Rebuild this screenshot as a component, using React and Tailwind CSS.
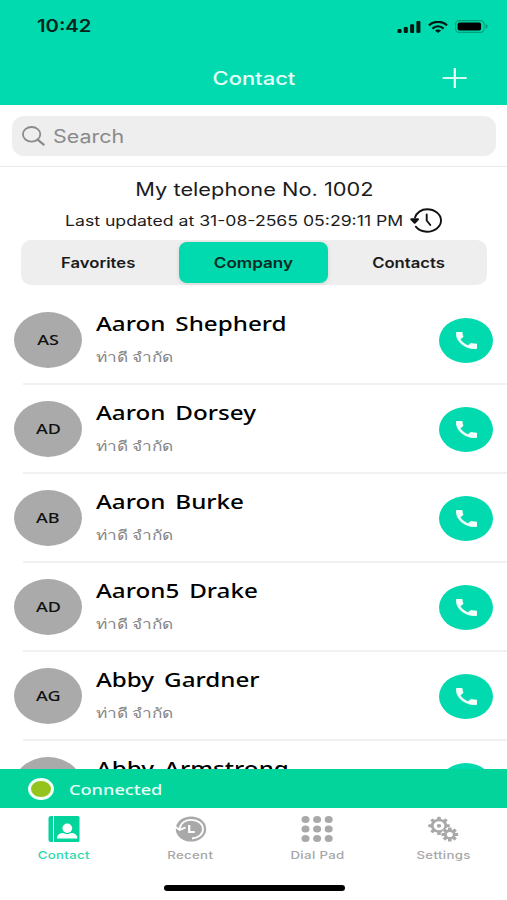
import clsx from 'clsx'

const contacts = [
  { initials: 'AS', name: 'Aaron Shepherd' },
  { initials: 'AD', name: 'Aaron Dorsey' },
  { initials: 'AB', name: 'Aaron Burke' },
  { initials: 'AD', name: 'Aaron5 Drake' },
  { initials: 'AG', name: 'Abby Gardner' },
  { initials: 'AA', name: 'Abby Armstrong' },
]

const company = 'ท่าดี จำกัด'

function StatusBar() {
  return (
    <div className="flex h-[53px] items-center justify-between pl-[37px] pr-[19px]">
      <span className="origin-left scale-x-[1.19] text-[17px] leading-none font-semibold text-[#06231c]">10:42</span>
      <div className="flex items-center gap-[7px]">
        <svg className="h-[12px] w-[24px]" viewBox="0 0 24 12" fill="#001a12">
          <rect x="0.5" y="8" width="4" height="4" rx="1" />
          <rect x="6.8" y="6" width="4" height="6" rx="1" />
          <rect x="13.1" y="3.2" width="4" height="8.8" rx="1" />
          <rect x="19.4" y="0" width="4" height="12" rx="1" />
        </svg>
        <svg className="h-[12px] w-[20px]" viewBox="0 0 20 12" preserveAspectRatio="none" fill="none" stroke="#001a12" strokeWidth="2.3">
          <path d="M1 4.4C6 -0.4 14 -0.4 19 4.4" />
          <path d="M4.4 7.7c3.3-3 7.9-3 11.2 0" />
          <path d="M10 12 6.9 9.6c1.7-1.5 4.5-1.5 6.2 0z" fill="#001a12" stroke="none" />
        </svg>
        <svg className="h-[13px] w-[33px]" viewBox="0 0 33 13">
          <rect x="0.6" y="0.6" width="28.5" height="11.8" rx="3.6" fill="none" stroke="#00a17a" strokeWidth="1.1" />
          <rect x="2.6" y="2.4" width="23.5" height="8.2" rx="2" fill="#000" />
          <path d="M30.7 4.3c2.6.6 2.6 3.8 0 4.4z" fill="#009b76" />
        </svg>
      </div>
    </div>
  )
}

function Header() {
  return (
    <header className="h-[105px] bg-[#01daae]">
      <StatusBar />
      <div className="grid h-[50px] grid-cols-[1fr_auto_1fr] items-center">
        <span />
        <h1 className="mt-[1px] scale-x-[1.22] text-[18px] leading-none font-medium text-[#e6fff8]">Contact</h1>
        <svg className="mr-[40px] h-[20px] w-[25px] justify-self-end" viewBox="0 0 25 20" stroke="#eafff9">
          <path d="M12.8 0v20" strokeWidth="2.2" />
          <path d="M0.7 10h24" strokeWidth="1.8" />
        </svg>
      </div>
    </header>
  )
}

function SearchBar() {
  return (
    <div className="h-[62px] border-b border-[#ebebeb] pt-[11px] pr-[11px] pl-[12px]">
      <div className="flex h-[40px] items-center gap-[8px] rounded-[12px] bg-[#eeeeee] pl-[10px] text-[#8a8a8c]">
        <svg className="h-[20px] w-[23px]" viewBox="0 0 23 20" fill="none" stroke="currentColor" strokeWidth="1.8">
          <ellipse cx="9.6" cy="8.3" rx="8.7" ry="7.3" />
          <path d="m15.6 13.6 6.1 5" strokeWidth="2.2" strokeLinecap="round" />
        </svg>
        <span className="mt-[1px] origin-left scale-x-[1.19] text-[18px] leading-none">Search</span>
      </div>
    </div>
  )
}

function HistoryIcon() {
  return (
    <svg className="h-[25px] w-[32px]" viewBox="0 0 32 25" fill="none" stroke="#111" strokeWidth="1.9" strokeLinecap="round">
      <path d="M5 9.5C6.5 4.700 11.300 1.300 17 1.300c7.700 0 14 5 14 11.200s-6.300 11.200-14 11.200c-4.800 0-8.700-1.900-11.200-5" />
      <path d="M1.300 11.200h6.700L4.700 14.800z" fill="#111" strokeLinejoin="round" strokeWidth="2" />
      <path d="M16.700 6.500v6l3.600 4.500" />
    </svg>
  )
}

function AccountInfo() {
  return (
    <div className="flex flex-col items-center">
      <p className="mt-[13px] flex h-[20px] items-center pl-[1px] text-[18px] leading-none text-[#1c1c1e]">
        <span className="scale-x-[1.21]">My telephone No. 1002</span>
      </p>
      <div className="mt-[7px] flex h-[27px] w-[378px] items-center justify-between">
        <p className="origin-left scale-x-[1.26] text-[14px] leading-none whitespace-nowrap text-[#1c1c1e]">
          Last updated at 31-08-2565 05:29:11 PM
        </p>
        <div className="-mr-px -translate-x-[2px]">
          <HistoryIcon />
        </div>
      </div>
    </div>
  )
}

function Segments() {
  return (
    <div className="mt-[6px] mr-[20px] ml-[21px] grid h-[45px] grid-cols-[158px_149px_159px] rounded-[10px] bg-[#eeeeee] py-[2px] text-[14px] font-semibold text-[#1a1a1c]">
      {['Favorites', 'Company', 'Contacts'].map((label) => (
        <button
          key={label}
          className={clsx(
            'flex items-center justify-center rounded-[8px] leading-none',
            label === 'Favorites' && 'pr-[4px]',
            label === 'Contacts' && 'pl-[3px]',
            label === 'Company' && 'bg-[#01daae] text-[#0a2b23] shadow-[0_1px_4px_rgba(0,0,0,0.12)]',
          )}
        >
          <span className={label === 'Company' ? 'scale-x-[1.22]' : 'scale-x-[1.19]'}>{label}</span>
        </button>
      ))}
    </div>
  )
}

function ContactRow({ contact }) {
  return (
    <li className="relative flex h-[89px] items-center px-[14px] font-['Noto_Sans',sans-serif]">
      <div className="-mt-[2px] flex h-[56px] w-[68px] shrink-0 items-center justify-center rounded-[50%] bg-[#aaaaaa]">
        <span className="scale-x-[1.2] text-[15px] leading-none font-medium text-[#111]">{contact.initials}</span>
      </div>
      <div className="-mt-[2px] ml-[14px] flex h-[56px] grow flex-col items-start">
        <p className="mt-[1px] origin-left scale-x-[1.21] text-[20px] leading-[22px] font-medium whitespace-nowrap text-black [word-spacing:3px]">
          {contact.name}
        </p>
        <p className="mt-[12px] origin-left scale-x-[1.23] text-[14px] leading-[20px] whitespace-nowrap text-[#858585]">{company}</p>
      </div>
      <button className="-mt-px flex h-[45px] w-[54px] shrink-0 items-center justify-center rounded-[50%] bg-[#01daae]">
        <svg className="h-[17px] w-[21px]" viewBox="3 3 18 18" preserveAspectRatio="none" fill="#f4fffc" stroke="#f4fffc" strokeWidth="0.4">
          <path d="M6.62 10.79c1.44 2.83 3.76 5.14 6.59 6.59l2.2-2.2c.27-.27.67-.36 1.02-.24 1.12.37 2.33.57 3.57.57.55 0 1 .45 1 1V20c0 .55-.45 1-1 1-9.39 0-17-7.61-17-17 0-.55.45-1 1-1h3.5c.55 0 1 .45 1 1 0 1.25.2 2.45.57 3.57.11.35.03.74-.25 1.02l-2.2 2.2z" />
        </svg>
      </button>
      <div className="absolute right-0 bottom-0 left-[23px] h-[2px] bg-[#f1f1f1]" />
    </li>
  )
}

function ConnectionBar() {
  return (
    <div className="flex h-[39px] shrink-0 items-center bg-[#02d49c] pt-[1px] pl-[28px]">
      <span className="h-[22px] w-[26px] rounded-[50%] border-[3px] border-[#f3fff8] bg-[#93c31c]" />
      <span className="ml-[15px] origin-left scale-x-[1.21] font-['Noto_Sans',sans-serif] text-[15px] leading-none font-medium text-[#e8fff8]">Connected</span>
    </div>
  )
}

function ContactIcon() {
  return (
    <svg className="h-[26px] w-[32px]" viewBox="0 0 32 26">
      <path d="M3 0h2v26H3a2.500 2.500 0 0 1-2.500-2.500v-21A2.500 2.500 0 0 1 3 0z" fill="#02d49c" />
      <path d="M6 0h24a1.500 1.500 0 0 1 1.500 1.500v23A1.500 1.500 0 0 1 30 26H6z" fill="#02d49c" />
      <ellipse cx="19.300" cy="12.300" rx="4.900" ry="4.700" fill="#fff" />
      <path d="M9 22.500c0-4 3-5.500 6.500-5.500 2.200 1.500 5.200 1.500 7.400 0 3.500 0 6.500 1.500 6.500 5.500z" fill="#fff" />
    </svg>
  )
}

function RecentIcon() {
  return (
    <svg className="h-[26px] w-[32px]" viewBox="0 0 32 26" fill="none">
      <ellipse cx="16" cy="13" rx="15.200" ry="12.600" fill="#a9a9a9" />
      <path d="M4.500 13C5.300 7 10.500 3.700 16.500 3.800c6.500.1 11.500 4.100 11.500 9.400 0 5-4.700 8.800-11 9.300" stroke="#fff" strokeWidth="1.800" />
      <path d="M.3 10.800 4.800 14l5.700-2.600" stroke="#fff" strokeWidth="1.800" />
      <path d="M14.200 9v7h5.600" stroke="#fff" strokeWidth="2.200" />
    </svg>
  )
}

function DialPadIcon() {
  return (
    <svg className="h-[26px] w-[32px]" viewBox="0 0 32 26" fill="#a9a9a9">
      {[3.5, 13, 22.5].map((cy) =>
        [4.5, 16.1, 27.7].map((cx) => <ellipse key={`${cx}-${cy}`} cx={cx} cy={cy} rx="4" ry="3.5" />),
      )}
    </svg>
  )
}

function Gear({ teeth, radius }) {
  return (
    <>
      {Array.from({ length: teeth }, (_, i) => (
        <rect key={i} x="-1.5" y={-radius - 2.1} width="3" height="4" rx="0.5" fill="#a9a9a9" transform={`rotate(${(360 / teeth) * i})`} />
      ))}
      <circle r={radius - 1.2} fill="none" stroke="#a9a9a9" strokeWidth="2.5" />
    </>
  )
}

function SettingsIcon() {
  return (
    <svg className="h-[26px] w-[32px]" viewBox="0 0 32 26">
      <g transform="translate(11 9.8) scale(1.18 1)">
        <Gear teeth={8} radius={7} />
        <circle r="1.9" fill="#a9a9a9" />
      </g>
      <g transform="translate(21.8 18.5) scale(1.18 1)">
        <circle r="7" fill="#fff" />
        <Gear teeth={8} radius={5} />
      </g>
    </svg>
  )
}

const tabs = [
  { label: 'Contact', icon: ContactIcon, active: true },
  { label: 'Recent', icon: RecentIcon },
  { label: 'Dial Pad', icon: DialPadIcon },
  { label: 'Settings', icon: SettingsIcon },
]

function TabBar() {
  return (
    <nav className="grid h-[77px] shrink-0 grid-cols-4 bg-white pt-[8px]">
      {tabs.map(({ label, icon: Icon, active }) => (
        <button key={label} className="flex flex-col items-center pl-[1px]">
          <Icon />
          <span className={clsx('mt-[7px] scale-x-[1.2] text-[11px] leading-[12px] font-medium tracking-[0.3px]', active ? 'text-[#2bd9ab]' : 'text-[#a6a6a6]')}>
            {label}
          </span>
        </button>
      ))}
    </nav>
  )
}

export default function App() {
  return (
    <div className="flex h-[900px] w-[507px] flex-col overflow-hidden bg-white font-['Inter',sans-serif]">
      <Header />
      <SearchBar />
      <AccountInfo />
      <Segments />
      <ul className="mt-[11px] min-h-0 flex-1 overflow-hidden">
        {contacts.map((contact) => (
          <ContactRow key={contact.name} contact={contact} />
        ))}
      </ul>
      <ConnectionBar />
      <TabBar />
      <div className="flex h-[15px] shrink-0 justify-center pl-[1px]">
        <div className="h-[6px] w-[181px] rounded-full bg-black" />
      </div>
    </div>
  )
}
